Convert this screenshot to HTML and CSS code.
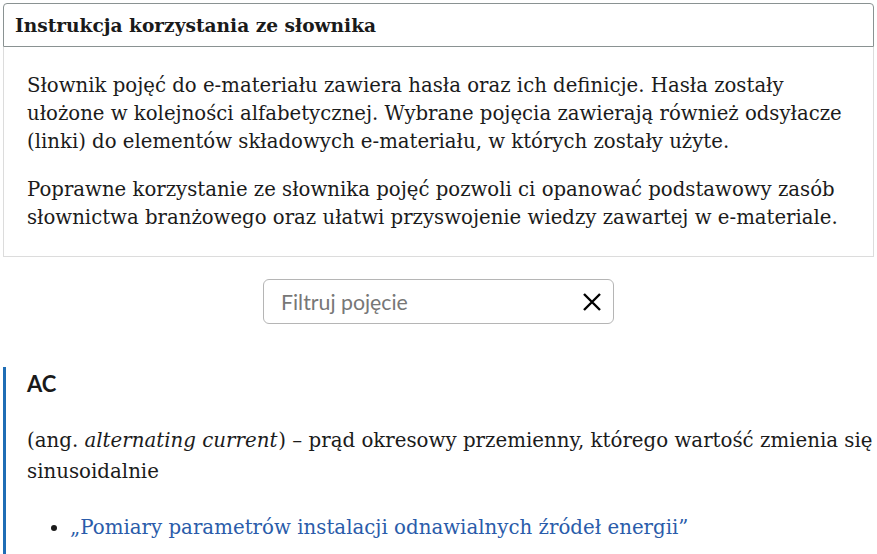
FILE: index.html
```html
<!DOCTYPE html>
<html lang="pl">
<head>
<meta charset="utf-8">
<title>Słownik pojęć</title>
<link rel="stylesheet" href="styles.css">
</head>
<body>
<main class="page">
  <section class="info">
    <h2 class="info-title">Instrukcja korzystania ze słownika</h2>
    <div class="info-body">
      <p>Słownik pojęć do e-materiału zawiera hasła oraz ich definicje. Hasła zostały ułożone w kolejności alfabetycznej. Wybrane pojęcia zawierają również odsyłacze (linki) do elementów składowych e-materiału, w których zostały użyte.</p>
      <p>Poprawne korzystanie ze słownika pojęć pozwoli ci opanować podstawowy zasób słownictwa branżowego oraz ułatwi przyswojenie wiedzy zawartej w e-materiale.</p>
    </div>
  </section>

  <div class="filter-row">
    <label class="filter">
      <input class="filter-input" type="text" placeholder="Filtruj pojęcie">
      <button class="filter-clear" type="button" aria-label="Wyczyść">
        <svg width="20" height="20" viewBox="0 0 20 20"><path d="M2 2 L18 18 M18 2 L2 18" stroke="#000" stroke-width="2.4" stroke-linecap="butt" fill="none"/></svg>
      </button>
    </label>
  </div>

  <article class="entry">
    <h3 class="entry-term">AC</h3>
    <p class="entry-def">(ang. <em>alternating current</em>) – prąd okresowy przemienny, którego wartość zmienia się sinusoidalnie</p>
    <ul class="entry-links">
      <li><a href="#">„Pomiary parametrów instalacji odnawialnych źródeł energii”</a></li>
    </ul>
  </article>
</main>
</body>
</html>
```
FILE: styles.css
```css
html, body {
  margin: 0;
  padding: 0;
  background: #fff;
}
body {
  font-family: "DejaVu Serif", "Liberation Serif", serif;
  color: #1b1b1b;
  overflow: hidden;
}
.page {
  padding: 3px 3px 0 3px;
}
.info-title {
  margin: 0;
  height: 44px;
  box-sizing: border-box;
  border: 1px solid #8a9292;
  border-radius: 4px 4px 0 0;
  padding: 0 11px;
  display: flex;
  align-items: center;
  font-size: 18.6px;
  font-weight: bold;
  color: #1a1a1a;
}
.info-body {
  border: 1px solid #dcdcdc;
  border-top: none;
  padding: 25px 23px 24px 23px;
  font-size: 19.7px;
  line-height: 28px;
}
.info-body p {
  margin: 0 0 20px 0;
}
.info-body p:last-child {
  margin-bottom: 0;
}
.filter-row {
  display: flex;
  justify-content: center;
  margin-top: 22px;
}
.filter {
  width: 351px;
  height: 45px;
  box-sizing: border-box;
  border: 1px solid #b5b5b5;
  border-radius: 6px;
  display: flex;
  align-items: center;
  padding: 0 11px 0 17px;
}
.filter-input {
  flex: 1;
  border: none;
  outline: none;
  padding: 0;
  font-family: Lato, sans-serif;
  font-size: 21.3px;
  color: #222;
  background: transparent;
  min-width: 0;
}
.filter-input::placeholder {
  color: #777;
}
.filter-clear {
  border: none;
  background: none;
  padding: 0;
  width: 20px;
  height: 20px;
  display: flex;
}
.entry {
  margin-top: 43px;
  border-left: 3px solid #1f6db5;
  padding-left: 21px;
  padding-bottom: 20px;
}
.entry-term {
  margin: 0;
  padding-top: 4px;
  font-family: Lato, sans-serif;
  font-weight: bold;
  font-size: 22px;
  line-height: 26px;
  color: #1a1a1a;
}
.entry-def {
  margin: 28px 0 0 0;
  font-size: 19.8px;
  line-height: 31px;
  color: #1b1b1b;
}
.entry-def em {
  padding-right: 1px;
}
.entry-links {
  margin: 25px 0 0 0;
  padding-left: 43px;
  font-size: 19.8px;
  line-height: 31px;
}
.entry-links a {
  color: #2a5caa;
  text-decoration: none;
}
```
